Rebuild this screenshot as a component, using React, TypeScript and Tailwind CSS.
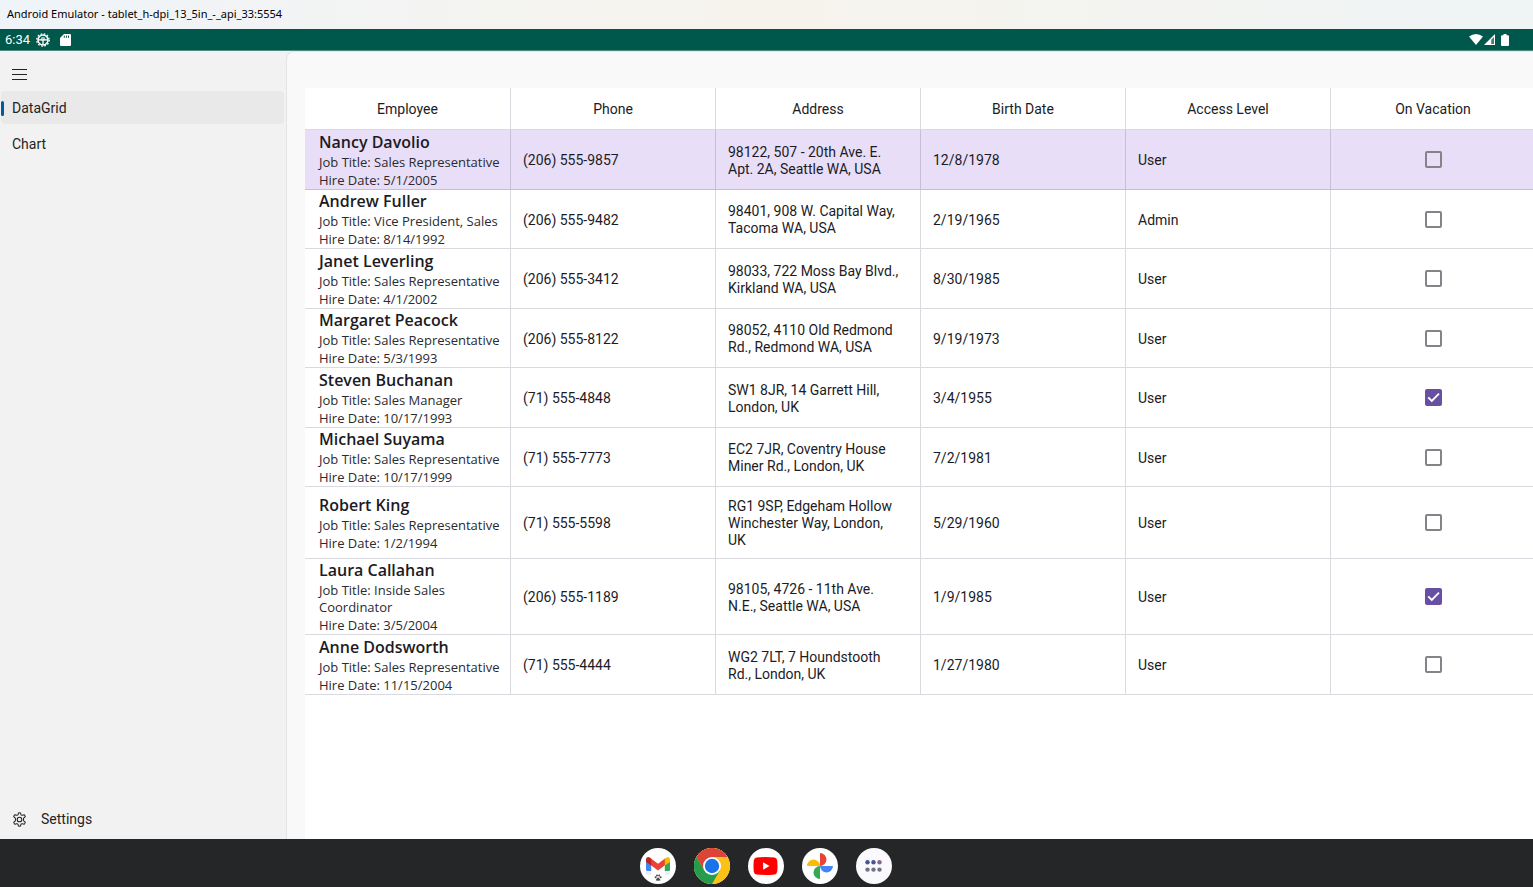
type Employee = {
  name: string;
  title: string;
  hired: string;
  phone: string;
  address: string;
  birth: string;
  access: string;
  vacation: boolean;
};

const employees: Employee[] = [
  { name: "Nancy Davolio", title: "Sales Representative", hired: "5/1/2005", phone: "(206) 555-9857", address: "98122, 507 - 20th Ave. E.\nApt. 2A, Seattle WA, USA", birth: "12/8/1978", access: "User", vacation: false },
  { name: "Andrew Fuller", title: "Vice President, Sales", hired: "8/14/1992", phone: "(206) 555-9482", address: "98401, 908 W. Capital Way,\nTacoma WA, USA", birth: "2/19/1965", access: "Admin", vacation: false },
  { name: "Janet Leverling", title: "Sales Representative", hired: "4/1/2002", phone: "(206) 555-3412", address: "98033, 722 Moss Bay Blvd.,\nKirkland WA, USA", birth: "8/30/1985", access: "User", vacation: false },
  { name: "Margaret Peacock", title: "Sales Representative", hired: "5/3/1993", phone: "(206) 555-8122", address: "98052, 4110 Old Redmond\nRd., Redmond WA, USA", birth: "9/19/1973", access: "User", vacation: false },
  { name: "Steven Buchanan", title: "Sales Manager", hired: "10/17/1993", phone: "(71) 555-4848", address: "SW1 8JR, 14 Garrett Hill,\nLondon, UK", birth: "3/4/1955", access: "User", vacation: true },
  { name: "Michael Suyama", title: "Sales Representative", hired: "10/17/1999", phone: "(71) 555-7773", address: "EC2 7JR, Coventry House\nMiner Rd., London, UK", birth: "7/2/1981", access: "User", vacation: false },
  { name: "Robert King", title: "Sales Representative", hired: "1/2/1994", phone: "(71) 555-5598", address: "RG1 9SP, Edgeham Hollow\nWinchester Way, London,\nUK", birth: "5/29/1960", access: "User", vacation: false },
  { name: "Laura Callahan", title: "Inside Sales Coordinator", hired: "3/5/2004", phone: "(206) 555-1189", address: "98105, 4726 - 11th Ave.\nN.E., Seattle WA, USA", birth: "1/9/1985", access: "User", vacation: true },
  { name: "Anne Dodsworth", title: "Sales Representative", hired: "11/15/2004", phone: "(71) 555-4444", address: "WG2 7LT, 7 Houndstooth\nRd., London, UK", birth: "1/27/1980", access: "User", vacation: false },
];

const columns = ["Employee", "Phone", "Address", "Birth Date", "Access Level", "On Vacation"];

function StatusBar() {
  return (
    <div className="flex h-[22px] items-center border-b border-[#4d8a7f] bg-[#00574b] pl-[5px] pr-6 text-white">
      <span className="text-[13px] leading-5">6:34</span>
      <svg className="ml-[6px] size-[14px]" viewBox="0 0 14 14" fill="none" stroke="currentColor">
        <circle cx="7" cy="7" r="5" strokeWidth="1.5" />
        <circle cx="7" cy="7" r="6.2" strokeWidth="1.4" strokeDasharray="1.6 1.65" />
        <path d="M2 6.8h10M7 7v5" strokeWidth="1.3" />
        <path d="M4.6 6.2a2.4 2.4 0 0 1 4.8 0v1.2H4.6z" fill="currentColor" stroke="none" opacity=".6" />
      </svg>
      <svg className="ml-[10px] h-3 w-[11px]" viewBox="0 0 11 12">
        <path d="M4 0h6q1 0 1 1v10q0 1-1 1H1q-1 0-1-1V4z" fill="#fff" />
        <path d="M4.3 1.6v2.2M6.4 1.6v2.2M8.5 1.6v2.2" stroke="#00574b" strokeWidth="1" />
      </svg>
      <div className="ml-auto flex items-center">
        <svg className="h-[11px] w-[14px]" viewBox="0 0 14 11">
          <path d="M0 2.6Q7-2.4 14 2.6L7 11z" fill="#fff" />
        </svg>
        <svg className="ml-[1px] size-[11px]" viewBox="0 0 11 11">
          <path d="M11 0v11H0z" fill="#fff" />
          <path d="M10 3v7H7.2V5.8z" fill="#00574b" opacity=".75" />
        </svg>
        <svg className="ml-[6px] h-3 w-2" viewBox="0 0 8 12">
          <path d="M2.5 0h3v1.2H7q1 0 1 1V11q0 1-1 1H1q-1 0-1-1V2.2q0-1 1-1h1.5z" fill="#fff" />
        </svg>
      </div>
    </div>
  );
}

function Sidebar() {
  return (
    <aside className="flex w-[286px] shrink-0 flex-col bg-[#f2f2f2] text-[14px] text-[#242424]">
      <button type="button" aria-label="Menu" className="ml-3 mt-[15px] flex h-4 w-4 items-center">
        <svg className="h-3 w-[15px]" viewBox="0 0 15 12" stroke="#242424" strokeWidth="1">
          <path d="M0 1.5h15M0 6.5h15M0 11.5h15" />
        </svg>
      </button>
      <nav className="mr-[2px] mt-[9px] flex flex-col gap-1 pl-[1px]">
        <a href="#datagrid" aria-current="page" className="flex h-[33px] items-center rounded-[4px] bg-[#e9e9e9] pt-[1px]">
          <span className="h-[15px] w-[3px] rounded-full bg-[#005a9e]" />
          <span className="ml-2">DataGrid</span>
        </a>
        <a href="#chart" className="flex h-8 items-center rounded-[4px] pl-[11px] pt-[1px]">Chart</a>
      </nav>
      <a href="#settings" className="mb-1 mt-auto flex h-8 items-center pl-3">
        <svg className="size-[15px]" viewBox="0 0 24 24" fill="none" stroke="#242424" strokeWidth="1.7" strokeLinejoin="round">
          <path d="M9.7 4.4 10.3 1.5Q12 1.1 13.7 1.5L14.3 4.4Q15.1 5.5 16.6 5.2L19.4 4.3Q20.7 5.600 21.3 7.3L19.1 9.3Q18.3 10.5 18.3 12T19.1 14.7L21.3 16.7Q20.7 18.4 19.4 19.7L16.6 18.8Q15.1 18.5 14.3 19.6L13.7 22.5Q12 22.9 10.3 22.5L9.7 19.6Q8.9 18.5 7.4 18.8L4.6 19.7Q3.3 18.4 2.7 16.7L4.9 14.7Q5.7 13.5 5.7 12T4.9 9.3L2.7 7.3Q3.3 5.6 4.6 4.3L7.4 5.2Q8.9 5.5 9.7 4.4Z" />
          <circle cx="12" cy="12" r="3.7" />
        </svg>
        <span className="ml-[14px]">Settings</span>
      </a>
    </aside>
  );
}

function VacationBox({ employee }: { employee: Employee }) {
  return (
    <span className="relative inline-flex size-[17px] align-middle">
      <input
        type="checkbox"
        aria-label={`${employee.name} on vacation`}
        defaultChecked={employee.vacation}
        className="peer size-[17px] appearance-none rounded-[2px] border-2 border-[#85838a] checked:border-[#6750a4] checked:bg-[#6750a4]"
      />
      <svg className="pointer-events-none absolute inset-0 hidden size-[17px] peer-checked:block" viewBox="0 0 17 17" fill="none" stroke="#fff" strokeWidth="1.8">
        <path d="M3.2 8.4 6.8 12 14 4.7" />
      </svg>
    </span>
  );
}

function EmployeeGrid() {
  const cell = "border-b border-l border-[#1d1b40]/17 p-0 pl-3 pt-[2px]";
  return (
    <table className="w-[calc(100%+2px)] table-fixed border-separate border-spacing-0 text-left text-[14px] leading-[17px] text-[#1c1b1f]">
      <thead>
        <tr className="h-[42px]">
          {columns.map((c) => (
            <th key={c} scope="col" className="border-b border-l border-[#1d1b40]/17 p-0 pt-[2px] text-center font-normal first:border-l-0">
              {c}
            </th>
          ))}
        </tr>
      </thead>
      <tbody>
        {employees.map((e) => (
          <tr key={e.name} className="h-[59px] first:bg-[#e8def8] odd:h-[60px] nth-7:h-[72px]">
            <td className="border-b border-[#1d1b40]/17 p-0 pl-[14px] pr-2 font-['Open_Sans',sans-serif] text-[13px] text-[#2b2a2e]">
              <div className="text-[16px] font-semibold leading-[23px] text-[#1c1b1f]">{e.name}</div>
              <div>Job Title: {e.title}</div>
              <div className="mt-[1px]">Hire Date: {e.hired}</div>
            </td>
            <td className={cell}>{e.phone}</td>
            <td className={`${cell} whitespace-pre-line`}>{e.address}</td>
            <td className={cell}>{e.birth}</td>
            <td className={cell}>{e.access}</td>
            <td className="border-b border-l border-[#1d1b40]/17 p-0 text-center">
              <VacationBox employee={e} />
            </td>
          </tr>
        ))}
      </tbody>
    </table>
  );
}

function Taskbar() {
  const app = "flex size-9 items-center justify-center rounded-full bg-white";
  return (
    <footer className="flex h-12 items-center justify-center gap-[18px] bg-[#252628] pr-[2px] pt-[6px]">
      <button type="button" aria-label="Gmail" className={app}>
        <svg className="size-9" viewBox="0 0 36 36">
          <path d="M6 23h5v4H7.5Q6 27 6 25.5zM25 23h5v2.500Q30 27 28.5 27H25z" fill="#e8f0f8" />
          <path d="M6 12h5.200v11H7.500Q6 23 6 21.500z" fill="#4285f4" />
          <path d="M24.800 12h5.200v9.500Q30 23 28.500 23H24.800z" fill="#34a853" />
          <path d="M11 10.500 18 15.800 25 10.500V17.300L18 22.600 11 17.300z" fill="#ea4335" />
          <path d="M6 12Q6 9 8.400 9 9.500 9 11.200 10.500V17.500L6 14z" fill="#c5221f" />
          <path d="M30 12Q30 9 27.600 9 26.500 9 24.800 10.500V17.500L30 14z" fill="#fbbc04" />
          <g fill="#4a4d50">
            <circle cx="15.6" cy="29.3" r="1" />
            <circle cx="17" cy="27.6" r="1" />
            <circle cx="19.2" cy="27.6" r="1" />
            <circle cx="20.6" cy="29.3" r="1" />
            <path d="M18.1 29.2Q20.6 31 20.4 32.2 19.8 33 18.1 32.5 16.4 33 15.8 32.2 15.6 31 18.1 29.2z" />
          </g>
        </svg>
      </button>
      <button type="button" aria-label="Chrome" className={app}>
        <svg className="size-9" viewBox="0 0 36 36">
          <circle cx="18" cy="18" r="18" fill="#fbc116" />
          <path d="M2.4 9A18 18 0 0 1 33.6 9H18L10.2 22.5z" fill="#db4437" />
          <path d="M2.4 9A18 18 0 0 0 18 36L25.8 22.5H10.2z" fill="#259b4c" />
          <circle cx="18" cy="18" r="9" fill="#fff" />
          <circle cx="18" cy="18" r="7.2" fill="#1a73e8" />
        </svg>
      </button>
      <button type="button" aria-label="YouTube" className={app}>
        <svg className="h-[18px] w-[25px]" viewBox="0 0 24 18">
          <path d="M3 .6Q12-.4 21 .6 23.4.9 23.7 3.5 24.3 9 23.7 14.5 23.4 17.1 21 17.4 12 18.4 3 17.4.6 17.1.3 14.5-.3 9 .3 3.5.6.9 3 .6z" fill="red" />
          <path d="M9.6 5.3 16 9 9.6 12.7z" fill="#fff" />
        </svg>
      </button>
      <button type="button" aria-label="Photos" className={app}>
        <svg className="size-[26px]" viewBox="0 0 26 26">
          <path d="M13 0A6.5 6.5 0 0 1 13 13z" fill="#ea4335" />
          <path d="M26 13A6.5 6.5 0 0 1 13 13z" fill="#4285f4" />
          <path d="M13 26A6.5 6.5 0 0 1 13 13z" fill="#34a853" />
          <path d="M0 13A6.5 6.5 0 0 1 13 13z" fill="#fbbc04" />
        </svg>
      </button>
      <button type="button" aria-label="All apps" className="flex size-9 items-center justify-center rounded-full bg-[#faf9fd]">
        <svg className="h-3 w-[17px]" viewBox="0 0 17 12">
          <g fill="#44558f">
            <circle cx="2.5" cy="2.3" r="2.2" />
            <circle cx="8.5" cy="2.3" r="2.2" />
          </g>
          <circle cx="14.5" cy="2.3" r="2.2" fill="#8b6486" />
          <g fill="#6e7387">
            <circle cx="2.5" cy="9.6" r="2.2" />
            <circle cx="8.5" cy="9.6" r="2.2" />
            <circle cx="14.5" cy="9.6" r="2.2" />
          </g>
        </svg>
      </button>
    </footer>
  );
}

export default function App() {
  return (
    <div className="flex min-h-screen flex-col overflow-hidden bg-[#f2f2f2] font-[Roboto,sans-serif]">
      <header className="flex h-[29px] items-center bg-linear-to-r from-[#eff4f9] via-[#f6f3ec] to-[#eff4f5] pb-[1px] pl-[7px] font-['Noto_Sans','Open_Sans',sans-serif] text-[11px] text-black">
        Android Emulator - tablet_h-dpi_13_5in_-_api_33:5554
      </header>
      <StatusBar />
      <div className="flex flex-1">
        <Sidebar />
        <main className="flex min-w-0 flex-1 flex-col rounded-tl-[8px] border-l border-t border-[#e4e4e4] bg-[#f9f9f9] pl-[18px] pt-9">
          <section aria-label="Employees" className="flex-1 overflow-hidden bg-white">
            <EmployeeGrid />
          </section>
        </main>
      </div>
      <Taskbar />
    </div>
  );
}
